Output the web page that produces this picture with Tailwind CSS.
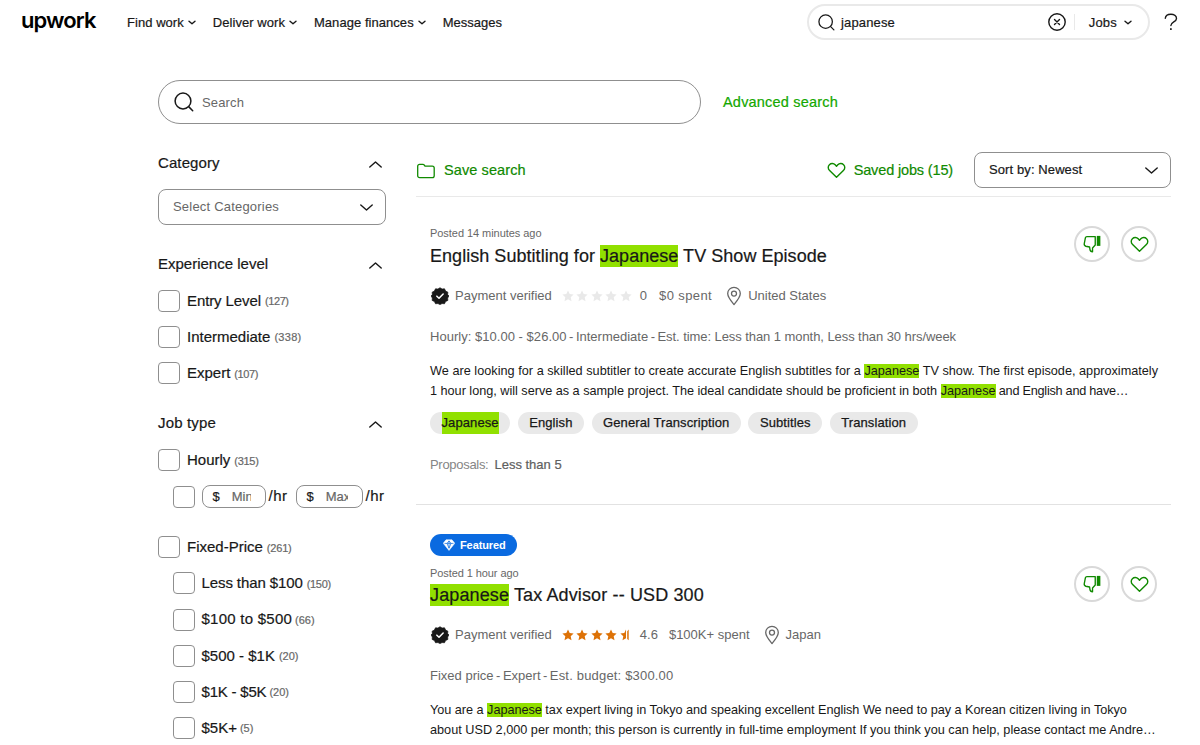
<!DOCTYPE html>
<html lang="en">
<head>
    <meta charset="UTF-8">
    <meta name="viewport" content="width=device-width, initial-scale=1.0">
    <title>Search jobs - Upwork</title>
    <script src="https://cdn.jsdelivr.net/npm/@tailwindcss/browser@4"></script>
</head>
<body class="bg-white text-[#181818] font-['Liberation_Sans',Arial,sans-serif] h-[745px] overflow-hidden whitespace-nowrap">
    <!-- Shared icons -->
    <svg class="hidden">
        <symbol id="down" viewBox="0 0 13 7"><path d="M.8.900 6.500 6 12.200.900" fill="none" stroke="currentColor" stroke-width="1.400" stroke-linecap="round" stroke-linejoin="round"/></symbol>
        <symbol id="caret" viewBox="0 0 8 5"><path d="M1 1.200 4 3.800 7 1.200" fill="none" stroke="currentColor" stroke-width="1.400" stroke-linecap="round" stroke-linejoin="round"/></symbol>
        <symbol id="glass" viewBox="0 0 20 20"><g fill="none" stroke="currentColor" stroke-width="1.500" stroke-linecap="round"><circle cx="9" cy="9" r="7.900"/><path d="m14.900 14.900 3.800 3.800"/></g></symbol>
        <symbol id="heart" viewBox="0 0 20 18"><path d="M10 16.200 2.700 9.100C.8 7.200.8 4.400 2.500 2.800c1.800-1.700 4.500-1.500 6.100.2L10 4.500 11.400 3c1.600-1.700 4.300-1.900 6.100-.2 1.700 1.600 1.700 4.400-.2 6.300z" fill="none" stroke="currentColor" stroke-width="1.500" stroke-linejoin="round"/></symbol>
        <symbol id="dislike" viewBox="0 0 20 20"><path d="M4.300 1.800h9.300v9.400l-3 3.200v4.200c-1.700 0-2.700-1-2.900-2.600l-.4-2.700-4.200-.8c-1.400-.5-2-1.400-1.700-2.800l1.300-6.700c.2-.8.800-1.200 1.600-1.200z" fill="none" stroke="currentColor" stroke-width="1.500" stroke-linejoin="round"/><path d="M15.300 1H19.300v11.100h-4z" fill="currentColor"/></symbol>
        <symbol id="verified" viewBox="0 0 20 20"><path d="m10 .8 2.300 1.500 2.700-.3 1.200 2.500 2.500 1.200-.2 2.700L20 10l-1.500 2.200.2 2.700-2.500 1.200-1.200 2.500-2.700-.2L10 19.500l-2.300-1.100-2.700.2-1.200-2.500-2.500-1.200.2-2.700L0 10l1.500-1.600-.2-2.700 2.500-1.200L5 2l2.700.3z" fill="#181818" stroke="#181818" stroke-width=".8" stroke-linejoin="round"/><path d="m6.500 10.200 2.400 2.300 4.600-4.700" fill="none" stroke="#fff" stroke-width="1.700" stroke-linecap="round" stroke-linejoin="round"/></symbol>
        <symbol id="pin" viewBox="0 0 16 20"><g fill="none" stroke="currentColor" stroke-width="1.300"><path d="M8 18.600C5 15 1.700 11.300 1.700 7.600a6.300 6.300 0 0 1 12.600 0C14.300 11.300 11 15 8 18.600z" stroke-linejoin="round"/><circle cx="8" cy="7.600" r="2.500"/></g></symbol>
        <symbol id="star" viewBox="0 0 12 12"><path d="m6 .5 1.700 3.600 3.900.5-2.900 2.700.8 3.900L6 9.300l-3.500 1.900.8-3.900L.4 4.600l3.900-.5z" fill="currentColor"/></symbol>
        <symbol id="halfstar" viewBox="0 0 12 12"><path d="M6 .5v8.800l-3.500 1.900.8-3.900L.4 4.600l3.900-.5zM7.200 2.300l1.500-1.800v10.700L7.200 10z" fill="currentColor"/></symbol>
    </svg>

    <header class="flex items-center h-11 pl-[21px] pr-[22px] text-[13px]">
        <a class="w-[106px] font-['Inter',sans-serif] font-semibold text-[22px] leading-6 tracking-[-0.9px] text-black -mt-[5px]">upwork</a>
        <nav class="flex items-center gap-[17px] tracking-[0.05px] [-webkit-text-stroke:0.2px] pt-px">
            <a class="flex items-center gap-1">Find work <svg class="w-2 h-[5px]"><use href="#caret"/></svg></a>
            <a class="flex items-center gap-1">Deliver work <svg class="w-2 h-[5px]"><use href="#caret"/></svg></a>
            <a class="flex items-center gap-1">Manage finances <svg class="w-2 h-[5px]"><use href="#caret"/></svg></a>
            <a class="tracking-normal">Messages</a>
        </nav>
        <div class="ml-auto flex items-center w-[343px] h-9 rounded-full border-2 border-[#e9e9e9] pl-[9px] pr-[16px] [-webkit-text-stroke:0.2px]">
            <svg class="w-[17px] h-[17px]"><use href="#glass"/></svg>
            <span class="ml-[6px] mt-px tracking-[0.15px]">japanese</span>
            <svg class="ml-auto w-[18px] h-[18px]" viewBox="0 0 18 18" fill="none" stroke="currentColor" stroke-width="1.400" stroke-linecap="round"><circle cx="9" cy="9" r="8.200"/><path d="m6.500 6.500 5 5m0-5-5 5"/></svg>
            <i class="w-px h-4 bg-[#e9e9e9] mx-2"></i>
            <span class="ml-[6px] mt-px tracking-[0.2px]">Jobs</span>
            <svg class="ml-[7px] w-2 h-[5px]"><use href="#caret"/></svg>
        </div>
        <svg class="ml-[14px] w-[14px] h-[18px]" viewBox="0 0 14 18" fill="none" stroke="currentColor" stroke-width="1.400" stroke-linecap="round"><path d="M1.300 5.300C1.500 2.800 3.900 1.200 6.900 1.200s5.600 1.700 5.600 4.200c0 3.500-5.600 3.400-5.600 7.100"/><path d="M6.900 16v.2" stroke-width="1.800"/></svg>
    </header>

    <main class="pl-[158px] pr-[29px] pt-9">
        <div class="flex items-center h-11">
            <div class="flex items-center w-[543px] h-11 rounded-full border border-[#8f8f8f] pl-[15px] text-[13px] text-[#676767]">
                <svg class="w-5 h-5 text-[#181818]"><use href="#glass"/></svg>
                <span class="ml-2 mt-px tracking-[0.15px]">Search</span>
            </div>
            <a class="ml-[22px] pt-px text-[14.500px] text-[#14a800] tracking-[0.2px] [-webkit-text-stroke:0.2px]">Advanced search</a>
        </div>

        <div class="flex">
            <!-- Filters -->
            <aside class="w-[228px] shrink-0 mr-[30px] pt-[26px] text-[15px]">
                <section>
                    <h2 class="flex items-center justify-between h-[26px] pr-1"><span class="tracking-[0.1px] [-webkit-text-stroke:0.2px]">Category</span><svg class="w-[13px] h-[7px] mt-[2px] rotate-180"><use href="#down"/></svg></h2>
                    <div class="mt-[13px] flex items-center justify-between h-9 rounded-lg border border-[#8f8f8f] pl-[14px] pr-3 text-[13px] text-[#676767]"><span class="tracking-[0.2px]">Select Categories</span><svg class="w-[13px] h-[7px] text-[#181818]"><use href="#down"/></svg></div>
                </section>

                <section class="mt-[26px]">
                    <h2 class="flex items-center justify-between h-[26px] pr-1"><span class="[-webkit-text-stroke:0.2px]">Experience level</span><svg class="w-[13px] h-[7px] mt-[2px] rotate-180"><use href="#down"/></svg></h2>
                    <div class="mt-[13px] flex flex-col gap-[14.200px] [-webkit-text-stroke:0.2px]">
                        <label class="flex items-center h-[22px]"><i class="w-[22px] h-[22px] rounded border border-[#8f8f8f] mr-[7px]"></i><span class="tracking-[-0.1px]">Entry Level</span><small class="ml-1 mt-px text-[11px] tracking-[-0.4px] text-[#676767]">(127)</small></label>
                        <label class="flex items-center h-[22px]"><i class="w-[22px] h-[22px] rounded border border-[#8f8f8f] mr-[7px]"></i>Intermediate<small class="ml-1 mt-px text-[11px] tracking-[0.300px] text-[#676767]">(338)</small></label>
                        <label class="flex items-center h-[22px]"><i class="w-[22px] h-[22px] rounded border border-[#8f8f8f] mr-[7px]"></i>Expert<small class="ml-1 mt-px text-[11px] tracking-[-0.4px] text-[#676767]">(107)</small></label>
                    </div>
                </section>

                <section class="mt-[26px]">
                    <h2 class="flex items-center justify-between h-[26px] pr-1"><span class="tracking-[0.150px] [-webkit-text-stroke:0.2px]">Job type</span><svg class="w-[13px] h-[7px] mt-[2px] rotate-180"><use href="#down"/></svg></h2>
                    <div class="mt-[13px] flex flex-col gap-[14.200px] [-webkit-text-stroke:0.2px]">
                        <label class="flex items-center h-[22px]"><i class="w-[22px] h-[22px] rounded border border-[#8f8f8f] mr-[7px]"></i>Hourly<small class="ml-1 mt-px text-[11px] tracking-[-0.3px] text-[#676767]">(315)</small></label>
                        <div class="flex items-center h-[22px] pl-[14.500px] mb-[14.500px]">
                            <i class="w-[22px] h-[22px] rounded border border-[#8f8f8f] mr-[7px]"></i>
                            <span class="flex items-center w-[64px] h-[23px] rounded-lg border border-[#8f8f8f] pl-[10px] text-[13px]">$<span class="ml-3 mt-px w-[19px] overflow-hidden text-[#676767]">Min</span></span>
                            <span class="ml-[3px] tracking-[0.500px]">/hr</span>
                            <span class="ml-2 flex items-center w-[67px] h-[23px] rounded-lg border border-[#8f8f8f] pl-[10px] text-[13px]">$<span class="ml-3 mt-px w-[22px] overflow-hidden text-[#676767]">Max</span></span>
                            <span class="ml-[3px] tracking-[0.500px]">/hr</span>
                        </div>
                        <label class="flex items-center h-[22px]"><i class="w-[22px] h-[22px] rounded border border-[#8f8f8f] mr-[7px]"></i>Fixed-Price<small class="ml-1 mt-px text-[11px] tracking-[-0.2px] text-[#676767]">(261)</small></label>
                        <label class="flex items-center h-[22px] pl-[14.500px]"><i class="w-[22px] h-[22px] rounded border border-[#8f8f8f] mr-[7px]"></i><span class="tracking-[-0.1px]">Less than $100</span><small class="ml-1 mt-px text-[11px] tracking-[-0.3px] text-[#676767]">(150)</small></label>
                        <label class="flex items-center h-[22px] pl-[14.500px]"><i class="w-[22px] h-[22px] rounded border border-[#8f8f8f] mr-[7px]"></i><span class="tracking-[0.250px]">$100 to $500</span><small class="ml-[3px] mt-px text-[11px] text-[#676767]">(66)</small></label>
                        <label class="flex items-center h-[22px] pl-[14.500px]"><i class="w-[22px] h-[22px] rounded border border-[#8f8f8f] mr-[7px]"></i>$500 - $1K<small class="ml-1 mt-px text-[11px] text-[#676767]">(20)</small></label>
                        <label class="flex items-center h-[22px] pl-[14.500px]"><i class="w-[22px] h-[22px] rounded border border-[#8f8f8f] mr-[7px]"></i><span class="tracking-[-0.200px]">$1K - $5K</span><small class="ml-[3px] mt-px text-[11px] text-[#676767]">(20)</small></label>
                        <label class="flex items-center h-[22px] pl-[14.500px]"><i class="w-[22px] h-[22px] rounded border border-[#8f8f8f] mr-[7px]"></i>$5K+<small class="ml-[3px] mt-px text-[11px] text-[#676767]">(5)</small></label>
                    </div>
                </section>
            </aside>

            <!-- Results -->
            <div class="flex-1 min-w-0 pt-7">
                <div class="flex items-center h-[45px] pb-[8px] border-b border-[#e9e9e9] text-[14.500px] text-[#108a00]">
                    <svg class="w-5 h-4 mt-px" viewBox="0 0 20 16" fill="none" stroke="currentColor" stroke-width="1.300" stroke-linejoin="round"><path d="M1.700 3.200c0-1.100.8-1.900 1.900-1.900h3.300c.6 0 1 .2 1.300.7l.8 1.100h7.300c1.100 0 1.900.8 1.900 1.900v7.800c0 1.100-.8 1.900-1.900 1.900H3.600c-1.100 0-1.900-.8-1.900-1.900z"/></svg>
                    <span class="ml-2 mt-px tracking-[0.1px] [-webkit-text-stroke:0.2px]">Save search</span>
                    <svg class="ml-auto w-[19px] h-[17px]"><use href="#heart"/></svg>
                    <span class="ml-[8px] mt-px tracking-[-0.15px] [-webkit-text-stroke:0.2px]">Saved jobs (15)</span>
                    <div class="ml-[21px] flex items-center justify-between w-[197px] h-9 rounded-lg border border-[#8f8f8f] pl-[14px] pr-3 text-[13px] text-[#181818]"><span class="tracking-[0.1px] [-webkit-text-stroke:0.2px]">Sort by: Newest</span><svg class="w-[13px] h-[7px]"><use href="#down"/></svg></div>
                </div>

                <article class="pl-[14px] pr-[14px] pt-[29px] h-[308px] border-b-[1.500px] border-[#e2e2e2]">
                    <div class="flex justify-between h-[50px]">
                        <div>
                            <p class="-mt-px text-[11px] leading-4 tracking-[-0.05px] text-[#676767]">Posted 14 minutes ago</p>
                            <h3 class="mt-1 text-[18px] leading-[22px] tracking-[0.040px] [-webkit-text-stroke:0.2px]">English Subtitling for <mark class="inline-block bg-[#91e000] text-inherit">Japanese</mark> TV Show Episode</h3>
                        </div>
                        <div class="flex gap-[11px]">
                            <button class="flex items-center justify-center size-9 rounded-full border-2 border-[#d9d9d9] text-[#108a00]"><svg class="w-[18px] h-[18px]"><use href="#dislike"/></svg></button>
                            <button class="flex items-center justify-center size-9 rounded-full border-2 border-[#d9d9d9] text-[#108a00]"><svg class="w-[19px] h-[17px]"><use href="#heart"/></svg></button>
                        </div>
                    </div>
                    <div class="mt-[10px] flex items-center h-5 text-[13px] text-[#676767]">
                        <svg class="ml-px w-[18px] h-[18px]"><use href="#verified"/></svg>
                        <span class="ml-[6px]">Payment verified</span>
                        <span class="ml-[10px] flex gap-[2.500px] text-[#e9e9e9]">
                            <svg class="w-3 h-3"><use href="#star"/></svg><svg class="w-3 h-3"><use href="#star"/></svg><svg class="w-3 h-3"><use href="#star"/></svg><svg class="w-3 h-3"><use href="#star"/></svg><svg class="w-3 h-3"><use href="#star"/></svg>
                        </span>
                        <span class="ml-2">0</span>
                        <span class="ml-3 -mt-px tracking-[0.4px]">$0 spent</span>
                        <svg class="ml-[14px] w-4 h-5"><use href="#pin"/></svg>
                        <span class="ml-[6px]">United States</span>
                    </div>
                    <p class="mt-[21px] text-[13px] leading-5 text-[#676767]"><span class="tracking-[0.030px]">Hourly: $10.00 - $26.00</span><span class="mx-[2.500px]">-</span>Intermediate<span class="mx-[2.500px]">-</span><span class="tracking-[-0.07px]">Est. time: Less than 1 month, Less than 30 hrs/week</span></p>
                    <p class="mt-[14px] text-[12.700px] leading-5"><span class="tracking-[0.02px]">We are looking for a skilled subtitler to create accurate English subtitles for a</span> <mark class="bg-[#91e000] text-inherit">Japanese</mark> TV show. The first episode, approximately<br><span class="tracking-[-0.02px]">1 hour long, will serve as a sample project. The ideal candidate should be proficient in both <mark class="bg-[#91e000] text-inherit">Japanese</mark></span><span class="tracking-[-0.250px]"> and English and have…</span></p>
                    <div class="mt-[11px] flex gap-[7.500px] text-[13px] leading-[22px] tracking-[0.1px] [-webkit-text-stroke:0.25px]">
                        <span class="px-[11.500px] rounded-full bg-[#e9e9e9]"><mark class="inline-block bg-[#91e000] text-inherit">Japanese</mark></span>
                        <span class="px-[11.500px] rounded-full bg-[#e9e9e9]">English</span>
                        <span class="px-[11.500px] rounded-full bg-[#e9e9e9]">General Transcription</span>
                        <span class="px-[11.500px] rounded-full bg-[#e9e9e9]">Subtitles</span>
                        <span class="px-[11.500px] rounded-full bg-[#e9e9e9]">Translation</span>
                    </div>
                    <p class="mt-[21px] text-[13px] leading-5 text-[#858585]"><span class="tracking-[-0.3px]">Proposals:</span><span class="ml-[6px] text-[#5e6060] [-webkit-text-stroke:0.2px]">Less than 5</span></p>
                </article>

                <article class="pl-[14px] pr-[14px] pt-[29px]">
                    <span class="flex items-center w-[87px] h-[22px] rounded-full bg-[#0a6ae0] pl-[13px] text-[11px] font-bold tracking-[-0.1px] text-white">
                        <svg class="w-3 h-3 mr-[5px]" viewBox="0 0 12 12"><path d="M3 .8h6L11.800 4.300 6 11.500.2 4.300z" fill="#fff" stroke="#fff" stroke-width=".5" stroke-linejoin="round"/><path d="M1.500 4.400h9M4 4.400 6 9.300l2-4.900L6 1.900zM6 1.900V9" fill="none" stroke="#0a6ae0" stroke-width=".7"/></svg>Featured
                    </span>
                    <div class="mt-[10px] flex justify-between h-[50px]">
                        <div>
                            <p class="-mt-px text-[11px] leading-4 tracking-[-0.08px] text-[#676767]">Posted 1 hour ago</p>
                            <h3 class="mt-[3px] text-[18px] leading-[22px] tracking-[0.130px] [-webkit-text-stroke:0.2px]"><mark class="inline-block bg-[#91e000] text-inherit">Japanese</mark> Tax Advisor -- USD 300</h3>
                        </div>
                        <div class="flex gap-[11px]">
                            <button class="flex items-center justify-center size-9 rounded-full border-2 border-[#d9d9d9] text-[#108a00]"><svg class="w-[18px] h-[18px]"><use href="#dislike"/></svg></button>
                            <button class="flex items-center justify-center size-9 rounded-full border-2 border-[#d9d9d9] text-[#108a00]"><svg class="w-[19px] h-[17px]"><use href="#heart"/></svg></button>
                        </div>
                    </div>
                    <div class="mt-[9px] flex items-center h-5 text-[13px] text-[#676767]">
                        <svg class="ml-px w-[18px] h-[18px]"><use href="#verified"/></svg>
                        <span class="ml-[6px]">Payment verified</span>
                        <span class="ml-[10px] flex gap-[2.500px] text-[#dd7207]">
                            <svg class="w-3 h-3"><use href="#star"/></svg><svg class="w-3 h-3"><use href="#star"/></svg><svg class="w-3 h-3"><use href="#star"/></svg><svg class="w-3 h-3"><use href="#star"/></svg><svg class="w-3 h-3"><use href="#halfstar"/></svg>
                        </span>
                        <span class="ml-2">4.6</span>
                        <span class="ml-[11px] -mt-px">$100K+ spent</span>
                        <svg class="ml-[14px] w-4 h-5"><use href="#pin"/></svg>
                        <span class="ml-[6px]">Japan</span>
                    </div>
                    <p class="mt-[21px] text-[13px] leading-5 text-[#676767]">Fixed price<span class="mx-[2.500px]">-</span>Expert<span class="mx-[2.500px]">-</span><span class="tracking-[0.180px]">Est. budget: $300.00</span></p>
                    <p class="mt-[14px] text-[12.700px] leading-5"><span class="tracking-[-0.03px]">You are a <mark class="bg-[#91e000] text-inherit">Japanese</mark> tax expert living in Tokyo and speaking excellent English We need to pay a Korean citizen living in Tokyo</span><br>about USD 2,000 per month; this person is currently in full-time employment If you think you can help, please contact me Andre…</p>
                </article>
            </div>
        </div>
    </main>
</body>
</html>
